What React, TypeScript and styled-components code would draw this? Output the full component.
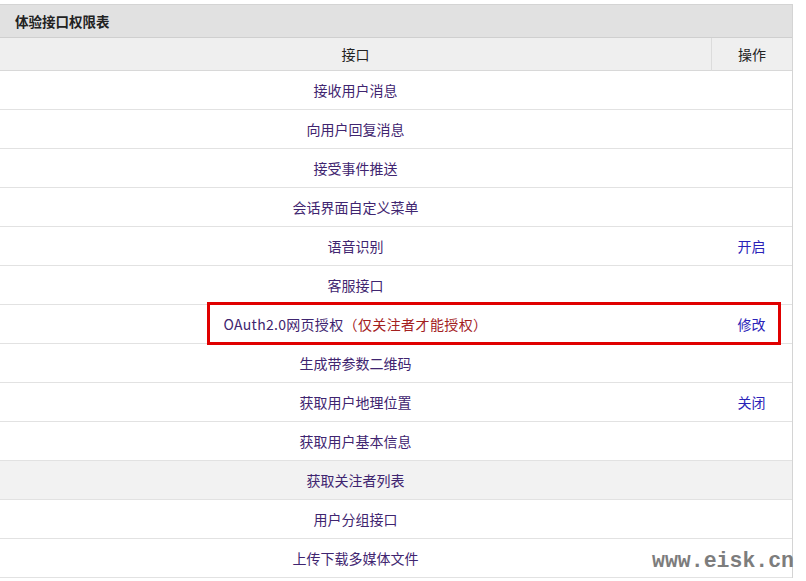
import React from 'react';
import styled, { createGlobalStyle } from 'styled-components';

const GlobalStyle = createGlobalStyle`
  html, body {
    margin: 0;
    padding: 0;
    background: #ffffff;
  }
  body {
    font-family: "Noto Sans CJK SC", "Noto Sans", sans-serif;
    font-size: 14px;
  }
`;

const Page = styled.div`
  position: relative;
  width: 806px;
  height: 581px;
  overflow: hidden;
  padding-top: 4px;
  box-sizing: border-box;
`;

const Panel = styled.div`
  width: 793px;
  border-top: 1px solid #d4d4d4;
  border-right: 1px solid #d4d4d4;
  box-sizing: border-box;
`;

const TitleBar = styled.div`
  height: 32px;
  background: #e1e1e1;
  border-bottom: 1px solid #cfcfcf;
  display: flex;
  align-items: center;
  padding-left: 15px;
  font-weight: bold;
  font-size: 13.5px;
  color: #222222;
`;

const Grid = styled.div`
  display: grid;
  grid-template-columns: 711px 1fr;
`;

const HeadCell = styled.div<{ $divider?: boolean }>`
  height: 32px;
  background: #efefef;
  border-bottom: 1px solid #d8d8d8;
  border-left: ${({ $divider }) => ($divider ? '1px solid #dcdcdc' : 'none')};
  display: flex;
  align-items: center;
  justify-content: center;
  color: #222222;
  font-size: 14px;
`;

const Cell = styled.div<{ $hover?: boolean }>`
  height: 38px;
  border-bottom: 1px solid #e2e2e2;
  background: ${({ $hover }) => ($hover ? '#f2f2f2' : '#ffffff')};
  display: flex;
  align-items: center;
  justify-content: center;
  color: #3f2570;
  font-size: 14px;
  white-space: nowrap;
`;

const Lead = styled.span`
  letter-spacing: 0.3px;
`;

const Note = styled.span`
  color: #a3201e;
  letter-spacing: 0.4px;
`;

const Action = styled.span`
  color: #2a22b8;
`;

const Highlight = styled.div`
  position: absolute;
  left: 207px;
  top: 302px;
  width: 574px;
  height: 43px;
  border: 3px solid #e00000;
  box-sizing: border-box;
  pointer-events: none;
`;

const Watermark = styled.div`
  position: absolute;
  right: 12px;
  bottom: 8px;
  font-family: "Liberation Mono", monospace;
  font-weight: bold;
  font-size: 21.5px;
  color: #7d7d7d;
`;

interface Row {
  name: React.ReactNode;
  action?: string;
  hover?: boolean;
}

const rows: Row[] = [
  { name: '接收用户消息' },
  { name: '向用户回复消息' },
  { name: '接受事件推送' },
  { name: '会话界面自定义菜单' },
  { name: '语音识别', action: '开启' },
  { name: '客服接口' },
  {
    name: (
      <>
        <Lead>OAuth2.0网页授权</Lead>
        <Note>（仅关注者才能授权）</Note>
      </>
    ),
    action: '修改',
  },
  { name: '生成带参数二维码' },
  { name: '获取用户地理位置', action: '关闭' },
  { name: '获取用户基本信息' },
  { name: '获取关注者列表', hover: true },
  { name: '用户分组接口' },
  { name: '上传下载多媒体文件' },
];

const App: React.FC = () => {
  return (
    <Page>
      <GlobalStyle />
      <Panel>
        <TitleBar>体验接口权限表</TitleBar>
        <Grid>
          <HeadCell>接口</HeadCell>
          <HeadCell $divider>操作</HeadCell>
          {rows.map((row, i) => (
            <React.Fragment key={i}>
              <Cell $hover={row.hover}>{row.name}</Cell>
              <Cell $hover={row.hover}>
                {row.action && <Action>{row.action}</Action>}
              </Cell>
            </React.Fragment>
          ))}
        </Grid>
      </Panel>
      <Highlight />
      <Watermark>www.eisk.cn</Watermark>
    </Page>
  );
};

export default App;
